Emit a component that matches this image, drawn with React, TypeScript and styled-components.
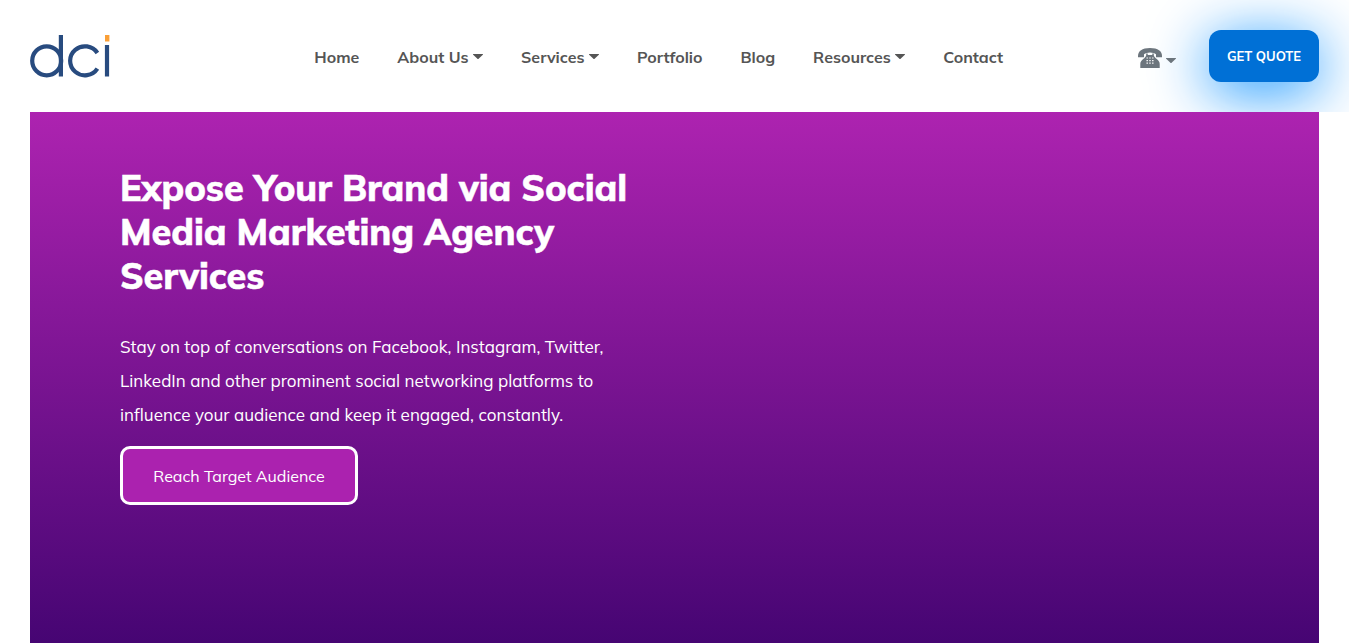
import React from "react";
import styled, { createGlobalStyle } from "styled-components";

const GlobalStyle = createGlobalStyle`
  *, *::before, *::after { box-sizing: border-box; }
  body {
    margin: 0;
    background: #fff;
    font-family: Mulish, Lato, sans-serif;
    overflow: hidden;
  }
`;

const Page = styled.div`
  width: 1349px;
  height: 643px;
  display: flex;
  flex-direction: column;
  overflow: hidden;
`;

const Header = styled.header`
  flex: none;
  height: 112px;
  padding: 0 30px;
  display: flex;
  align-items: center;
  overflow: hidden;
`;

const Logo = styled.svg`
  width: 80px;
  height: 44px;
  display: block;
`;

const Nav = styled.nav`
  display: flex;
  gap: 38px;
  margin-left: 204.300px;
  padding-top: 2px;
`;

const NavItem = styled.a`
  display: flex;
  align-items: center;
  gap: 4.500px;
  color: #555;
  font-size: 16px;
  font-weight: 700;
  line-height: 24px;
  white-space: nowrap;
`;

const Caret = styled.svg<{ $drop?: number }>`
  width: 10px;
  height: 5px;
  flex: none;
  margin-bottom: 2px;
  fill: currentColor;
  ${(p) => p.$drop && `margin: ${p.$drop}px 0 0;`}
`;

const Actions = styled.div`
  display: flex;
  align-items: center;
  margin-left: auto;
`;

const PhoneMenu = styled.div`
  display: flex;
  align-items: center;
  gap: 4px;
  margin-right: 33px;
  padding-top: 4px;
  color: #6c757d;
  position: relative;
  z-index: 1;
`;

const PhoneIcon = styled.svg`
  width: 24px;
  height: 20px;
`;

const QuoteButton = styled.a`
  width: 110px;
  height: 52px;
  display: flex;
  align-items: center;
  justify-content: center;
  border-radius: 12px;
  background: #0070d6;
  box-shadow: 0 10px 60px rgba(0, 140, 255, 0.95);
  color: #fff;
  font-size: 13px;
  font-weight: 700;
`;

const Hero = styled.section`
  flex: 1;
  margin: 0 30px;
  padding: 54px 90px 0;
  background: linear-gradient(#ad23b0, #460573);
  color: #fff;
`;

const Title = styled.h1`
  width: 540px;
  margin: 0;
  font-size: 36px;
  font-weight: 800;
  line-height: 44px;
  letter-spacing: -0.07px;
  -webkit-text-stroke: 0.5px #fff;
`;

const Lead = styled.p`
  width: 500px;
  margin: 32px 0 14px;
  font-size: 17px;
  line-height: 34px;
  letter-spacing: 0.015px;
`;

const HeroButton = styled.a`
  width: 238px;
  height: 59px;
  display: flex;
  align-items: center;
  justify-content: center;
  border: 3px solid #fff;
  border-radius: 10px;
  background: #ab22af;
  font-size: 16px;
`;

const links = [
  { label: "Home" },
  { label: "About Us", menu: true },
  { label: "Services", menu: true },
  { label: "Portfolio" },
  { label: "Blog" },
  { label: "Resources", menu: true },
  { label: "Contact" },
];

function DownCaret({ drop }: { drop?: number }) {
  return (
    <Caret viewBox="0 0 10 5" $drop={drop}>
      <path d="M.4 0h9.2c.4 0 .5.4.2.7L5.6 4.7a.9.9 0 0 1-1.2 0L.2.7C-.1.4 0 0 .4 0z" />
    </Caret>
  );
}

export default function App() {
  return (
    <>
      <GlobalStyle />
      <Page>
        <Header>
          <Logo viewBox="0 0 80 44" fill="none">
            <g stroke="#284b7f" strokeWidth="4.2">
              <circle cx="16.7" cy="26.8" r="14.5" />
              <path d="M30.9 1v41.5" />
              <path d="M67.4 19A14.8 14.5 0 1 0 67.4 34.6" />
              <path d="M77 11v31.5" />
            </g>
            <path fill="#fa9f36" d="M75 1h4.4v6.5H75z" />
          </Logo>
          <Nav>
            {links.map((l) => (
              <NavItem key={l.label}>
                {l.label}
                {l.menu && <DownCaret />}
              </NavItem>
            ))}
          </Nav>
          <Actions>
            <PhoneMenu>
              <PhoneIcon viewBox="0 0 24 20">
                <path
                  fill="currentColor"
                  d="M0 8C0 3 4 0 12 0s12 3 12 8v1.200h-6V6.300C16.500 5.400 14.500 4.600 12 4.600s-4.500.8-6 1.700v2.900H0z"
                />
                <path
                  fill="currentColor"
                  d="M8.200 5.500h1.500V7h4.600V5.500h1.500V7.500c.6 1.200 1.400 2.300 3 3.600 2 1.700 2.900 3 2.900 5V20H2.300v-3.900c0-2 .9-3.300 2.900-5 1.600-1.300 2.400-2.400 3-3.600z"
                />
                <path
                  stroke="#fff"
                  strokeWidth="1.2"
                  strokeDasharray="1.4 1.4"
                  d="M8.500 10h7M8.500 12.600h7M8.500 15.200h7"
                />
              </PhoneIcon>
              <DownCaret drop={4} />
            </PhoneMenu>
            <QuoteButton>GET QUOTE</QuoteButton>
          </Actions>
        </Header>
        <Hero>
          <Title>Expose Your Brand via Social Media Marketing Agency Services</Title>
          <Lead>
            Stay on top of conversations on Facebook, Instagram, Twitter, LinkedIn and other
            prominent social networking platforms to influence your audience and keep it engaged,
            constantly.
          </Lead>
          <HeroButton>Reach Target Audience</HeroButton>
        </Hero>
      </Page>
    </>
  );
}
